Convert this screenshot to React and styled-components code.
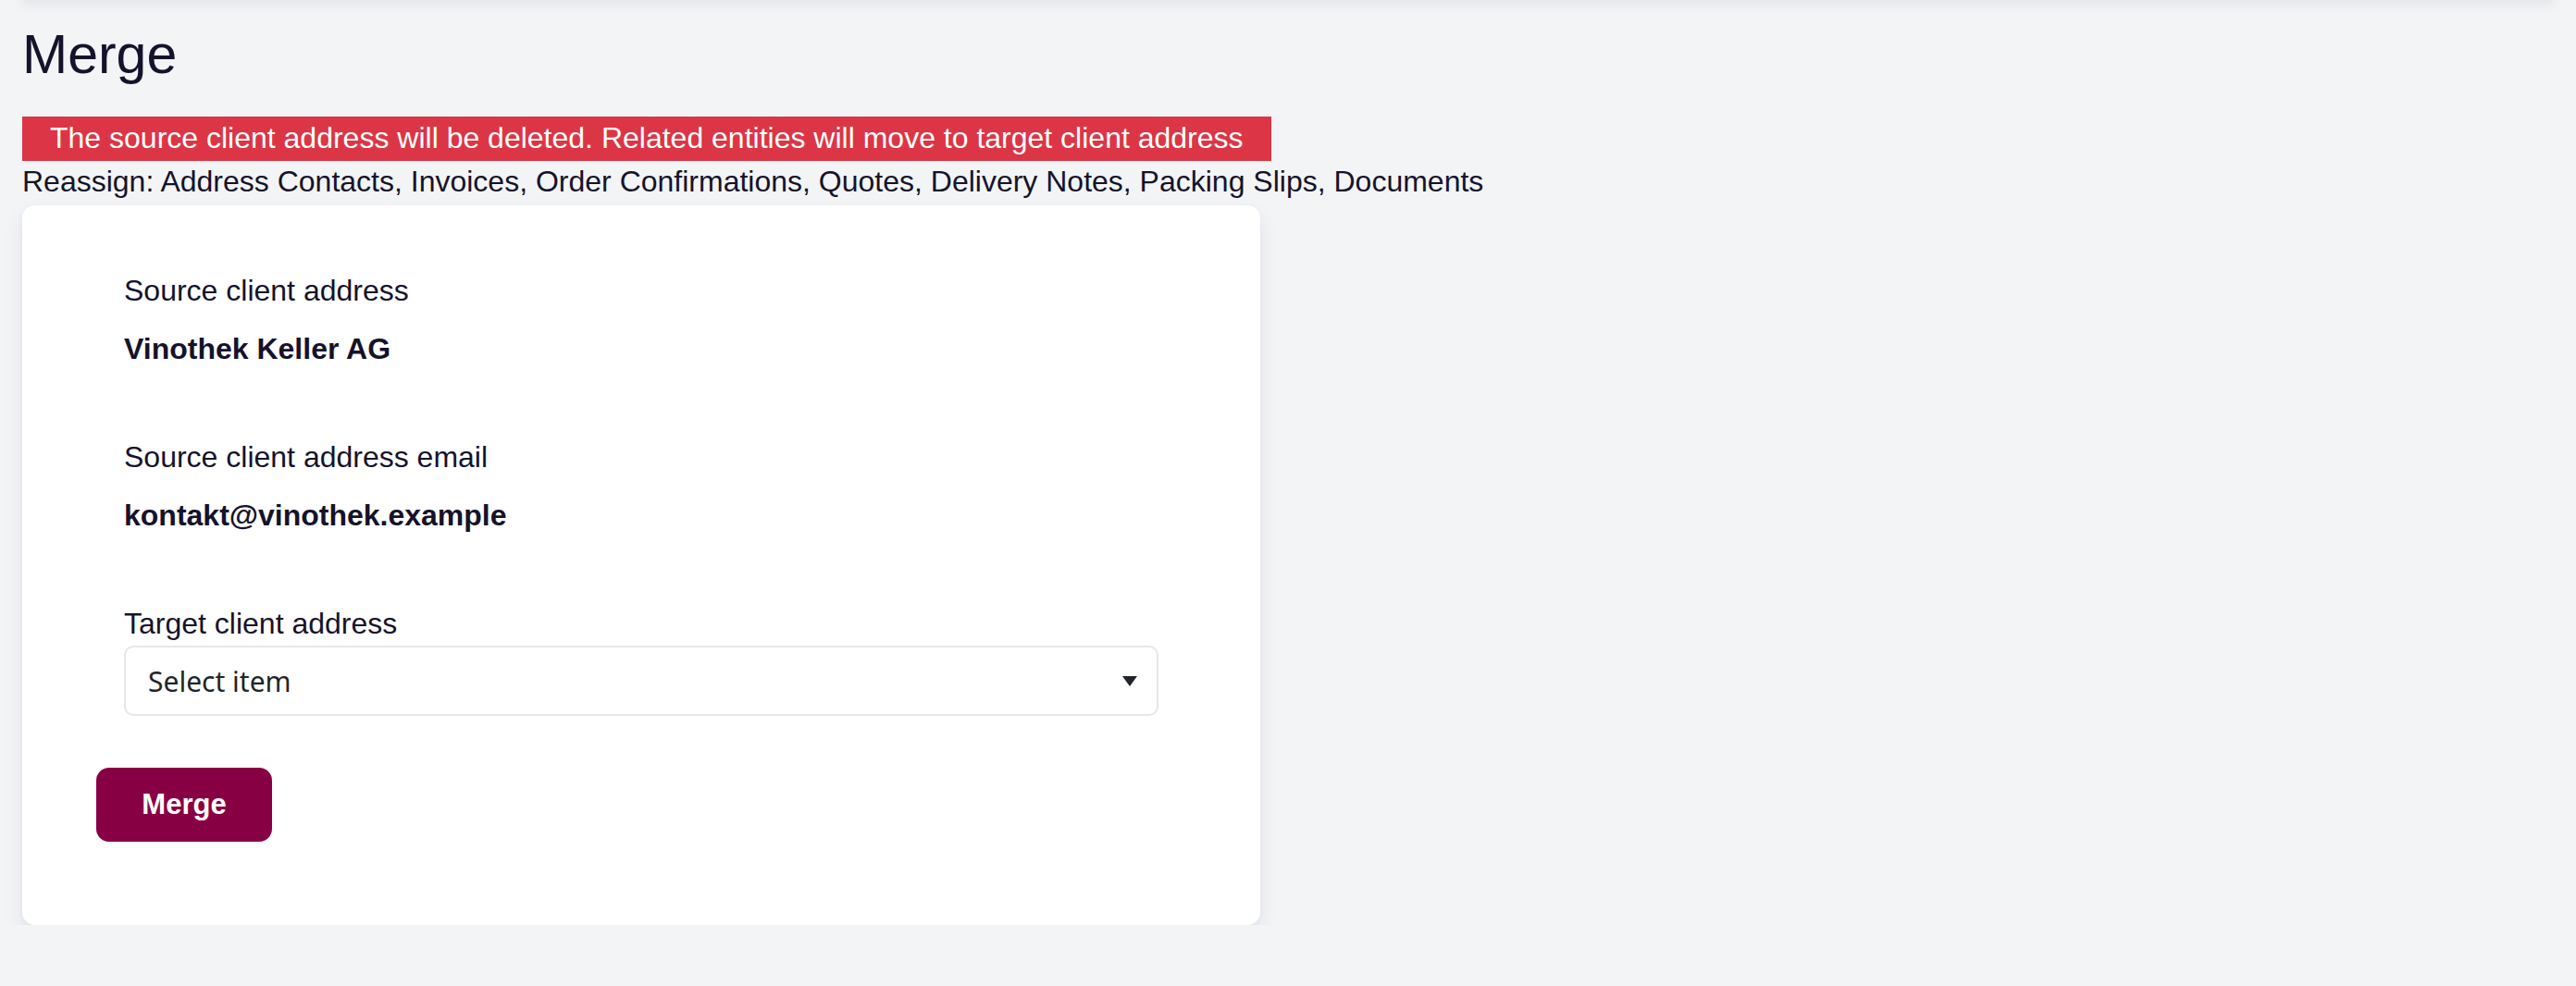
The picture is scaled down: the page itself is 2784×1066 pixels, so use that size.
import styled, { createGlobalStyle } from "styled-components";

const GlobalStyle = createGlobalStyle`
  html, body {
    margin: 0;
    padding: 0;
    background: #f3f4f6;
  }

  body {
    font-family: "Liberation Sans", Arial, sans-serif;
    color: #15132b;
  }
`;

const fields = [
    {label: 'Source client address', value: 'Vinothek Keller AG'},
    {label: 'Source client address email', value: 'kontakt@vinothek.example'}
];

const reassign = ['Address Contacts', 'Invoices', 'Order Confirmations', 'Quotes', 'Delivery Notes', 'Packing Slips', 'Documents'];

const App = () => {
    return (
        <>
            <GlobalStyle/>
            <Page>
                <TopShade/>
                <Title>Merge</Title>
                <Alert>The source client address will be deleted. Related entities will move to target client address</Alert>
                <Note>Reassign: {reassign.join(', ')}</Note>
                <Card>
                    <Fields>
                        {fields.map(field => (
                            <Field key={field.label}>
                                <Label>{field.label}</Label>
                                <Value>{field.value}</Value>
                            </Field>
                        ))}
                        <Field>
                            <Label $tight>Target client address</Label>
                            <Select>
                                <span>Select item</span>
                                <svg width="16" height="11" viewBox="0 0 16 11">
                                    <polygon points="0,0 16,0 8,11" fill="#212529"/>
                                </svg>
                            </Select>
                        </Field>
                    </Fields>
                    <MergeButton>Merge</MergeButton>
                </Card>
            </Page>
        </>
    );
};

const Page = styled.div`
  padding: 0 24px;
  display: flex;
  flex-direction: column;
  align-items: flex-start;
`

const TopShade = styled.div`
  align-self: stretch;
  height: 24px;
  margin-top: -24px;
  background: #f3f4f6;
  box-shadow: 0 4px 14px rgba(40, 50, 90, 0.09);
`

const Title = styled.h1`
  margin: 27px 0 0;
  font-size: 59px;
  line-height: 65px;
  font-weight: 400;
`

const Alert = styled.div`
  margin-top: 34px;
  padding: 4px 30px 6px;
  background: #dc3545;
  color: #ffffff;
  font-size: 32px;
  line-height: 38px;
`

const Note = styled.p`
  margin: 4px 0 0;
  font-size: 32px;
  line-height: 37px;
`

const Card = styled.div`
  box-sizing: border-box;
  width: 1338px;
  margin-top: 7px;
  padding: 74px 80px 90px;
  background: #ffffff;
  border-radius: 14px;
  box-shadow: 0 10px 22px rgba(40, 50, 90, 0.08), 0 2px 6px rgba(40, 50, 90, 0.04);
`

const Fields = styled.div`
  display: flex;
  flex-direction: column;
  gap: 80px;
  padding: 0 30px;
`

const Field = styled.div`
  display: flex;
  flex-direction: column;
`

const Label = styled.div`
  font-size: 32px;
  line-height: 37px;
  margin-bottom: ${p => p.$tight ? '5px' : '26px'};
`

const Value = styled.div`
  font-size: 32px;
  line-height: 37px;
  font-weight: 700;
`

const Select = styled.div`
  box-sizing: border-box;
  height: 76px;
  display: flex;
  align-items: center;
  justify-content: space-between;
  padding: 0 21px 0 24px;
  border: 2px solid #e5e7eb;
  border-radius: 10px;
  font-family: "Noto Sans", "Open Sans", sans-serif;
  font-size: 30px;
  color: #212529;
`

const MergeButton = styled.button`
  margin-top: 56px;
  width: 190px;
  height: 80px;
  border: none;
  border-radius: 14px;
  background: #880044;
  color: #ffffff;
  font-family: "Liberation Sans", Arial, sans-serif;
  font-size: 31px;
  font-weight: 700;
`

export default App;
